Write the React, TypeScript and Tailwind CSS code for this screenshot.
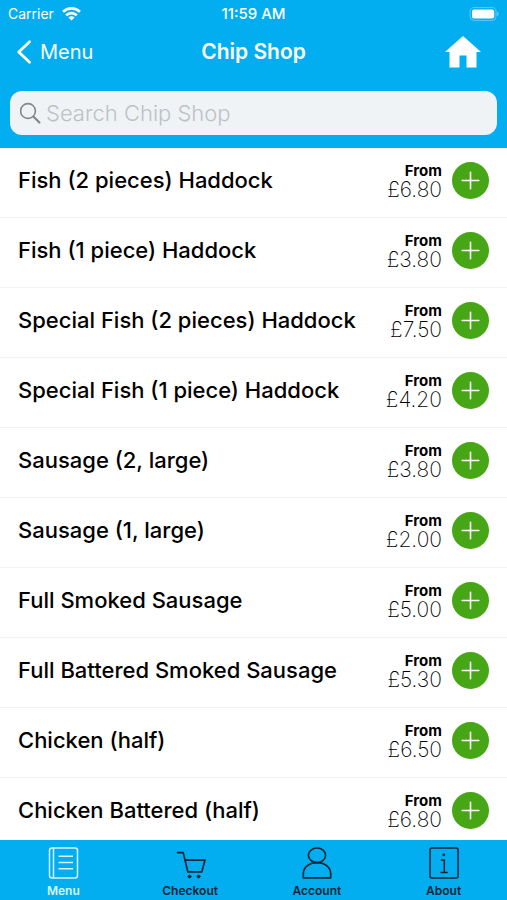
const items = [
  { name: 'Fish (2 pieces) Haddock', price: '£6.80' },
  { name: 'Fish (1 piece) Haddock', price: '£3.80' },
  { name: 'Special Fish (2 pieces) Haddock', price: '£7.50' },
  { name: 'Special Fish (1 piece) Haddock', price: '£4.20' },
  { name: 'Sausage (2, large)', price: '£3.80' },
  { name: 'Sausage (1, large)', price: '£2.00' },
  { name: 'Full Smoked Sausage', price: '£5.00' },
  { name: 'Full Battered Smoked Sausage', price: '£5.30' },
  { name: 'Chicken (half)', price: '£6.50' },
  { name: 'Chicken Battered (half)', price: '£6.80' },
]

function MenuIcon() {
  return (
    <svg className="h-8 w-8" viewBox="0 0 32 32" fill="none" stroke="currentColor" strokeWidth="1.5" aria-hidden="true">
      <rect x="2.5" y="1" width="28" height="30" rx="2.5" />
      <path d="M6.5 1v30M11.5 9.3h14.5M11.5 15.5h14.5M11.5 21.7h14.5" />
    </svg>
  )
}

function CartIcon() {
  return (
    <svg className="h-8 w-8" viewBox="0 0 32 32" fill="none" stroke="currentColor" strokeWidth="1.7" strokeLinecap="round" strokeLinejoin="round" aria-hidden="true">
      <path d="M3.5 5.6h5.7l4.6 19.2h14l3.2-11.7H11" />
      <circle cx="15.5" cy="29.5" r="1.4" fill="currentColor" strokeWidth="1" />
      <circle cx="24.5" cy="29.5" r="1.4" fill="currentColor" strokeWidth="1" />
    </svg>
  )
}

function AccountIcon() {
  return (
    <svg className="h-8 w-8" viewBox="0 0 32 32" fill="none" stroke="currentColor" strokeWidth="1.7" strokeLinejoin="round" aria-hidden="true">
      <ellipse cx="16" cy="8.3" rx="8.6" ry="7.3" />
      <path d="M2.3 30.8v-4c0-6.3 5.4-11.2 13.7-11.2s13.7 4.9 13.7 11.2v4z" />
    </svg>
  )
}

function AboutIcon() {
  return (
    <svg className="h-8 w-8" viewBox="0 0 32 32" fill="none" stroke="currentColor" strokeWidth="1.5" aria-hidden="true">
      <rect x="2" y="1" width="28" height="30" rx="2" />
      <path d="M12.8 13h3.5v12.3M12.5 25.6h7.2" />
      <circle cx="15.8" cy="7.9" r="1.4" fill="currentColor" stroke="none" />
    </svg>
  )
}

const tabs = [
  { label: 'Menu', icon: MenuIcon, active: true },
  { label: 'Checkout', icon: CartIcon, active: false },
  { label: 'Account', icon: AccountIcon, active: false },
  { label: 'About', icon: AboutIcon, active: false },
]

function StatusBar() {
  return (
    <div className="grid h-7 grid-cols-3 items-center px-2 text-sm text-white">
      <div className="flex items-center gap-2">
        <span>Carrier</span>
        <svg className="h-[14px] w-[19px]" viewBox="0 0 19 14" fill="none" stroke="currentColor" strokeWidth="2.6" aria-hidden="true">
          <path d="M1 4.8c4.8-4.6 12.2-4.6 17 0" />
          <path d="M4.2 8.3c3-2.9 7.6-2.9 10.6 0" />
          <path d="M9.5 13.6L6.4 10.4c1.8-1.6 4.4-1.6 6.2 0z" fill="currentColor" stroke="none" />
        </svg>
      </div>
      <span className="text-center text-[15px] font-medium">11:59 AM</span>
      <svg className="h-[14px] w-[30px] justify-self-end" viewBox="0 0 30 14" aria-hidden="true">
        <rect x="1.1" y="0.6" width="26" height="12.8" rx="4" fill="none" stroke="#5fcbf5" />
        <rect x="3" y="2.5" width="22.2" height="9" rx="2" fill="#fff" />
        <path d="M28.2 4.8c2 .6 2 3.8 0 4.4z" fill="#5fcbf5" />
      </svg>
    </div>
  )
}

export default function App() {
  return (
    <div className="flex h-screen flex-col bg-white font-['Inter',sans-serif] text-black">
      <header className="shrink-0 bg-[#02aeef] pb-[13px]">
        <StatusBar />
        <div className="grid h-12 grid-cols-[1fr_auto_1fr] items-center text-white">
          <a href="#menu" className="flex items-center gap-2 pl-4 text-xl">
            <svg className="h-6 w-4" viewBox="0 0 16 24" fill="none" stroke="currentColor" strokeWidth="2.8" strokeLinecap="round" strokeLinejoin="round" aria-hidden="true">
              <path d="M13.5 1.8L2.8 12L13.5 22.2" />
            </svg>
            Menu
          </a>
          <h1 className="text-center text-[21px] font-semibold whitespace-nowrap">Chip Shop</h1>
          <a href="#home" aria-label="Home" className="justify-self-end pr-[26px]">
            <svg className="h-8 w-9" viewBox="0 0 36 32" fill="currentColor" aria-hidden="true">
              <path d="M18 0L36 16H31.5V31.5H21.5V19.5h-7V31.5H4.5V16H0z" />
            </svg>
          </a>
        </div>
        <label className="mx-2.5 mt-[15px] flex h-11 items-center gap-1 rounded-xl bg-[#eff3f6] px-2.5">
          <svg className="h-[22px] w-[22px] shrink-0 text-[#85888a]" viewBox="0 0 22 22" fill="none" stroke="currentColor" strokeWidth="1.6" strokeLinecap="round" aria-hidden="true">
            <circle cx="8" cy="9" r="7.4" />
            <path d="M13.4 14.5l6 6" strokeWidth="2.2" />
          </svg>
          <input
            type="search"
            aria-label="Search Chip Shop"
            placeholder="Search Chip Shop"
            className="min-w-0 flex-1 bg-transparent text-[22px] font-light outline-none placeholder:text-[#bec1c4]"
          />
        </label>
      </header>

      <main className="min-h-0 flex-1 overflow-hidden">
        <ul>
          {items.map((item) => (
            <li key={item.name} className="flex h-[70px] items-center gap-2.5 border-b border-[#f3f3f3] pr-[18px] pb-1 pl-[18px]">
              <h2 className="min-w-0 flex-1 text-[22px] font-medium whitespace-nowrap">{item.name}</h2>
              <div className="text-right">
                <p className="text-[15px] leading-[18px] font-bold">From</p>
                <p className="text-[21px] leading-5 font-extralight">{item.price}</p>
              </div>
              <button type="button" aria-label={`Add ${item.name}`} className="flex h-[37px] w-[37px] items-center justify-center rounded-full bg-[#46a616] text-white">
                <svg className="h-[19px] w-[19px]" viewBox="0 0 19 19" stroke="currentColor" strokeWidth="1.6" strokeLinecap="round" aria-hidden="true">
                  <path d="M9.5 1.2v16.6M1.2 9.5h16.6" />
                </svg>
              </button>
            </li>
          ))}
        </ul>
      </main>

      <nav className="grid h-[60px] shrink-0 grid-cols-4 bg-[#02aeef]">
        {tabs.map(({ label, icon: Icon, active }) => (
          <a
            key={label}
            href={`#${label.toLowerCase()}`}
            className={`flex flex-col items-center gap-1 pt-[7px] text-xs font-semibold ${active ? 'text-[#d5f5ff]' : 'text-[#062535]'}`}
          >
            <Icon />
            {label}
          </a>
        ))}
      </nav>
    </div>
  )
}
